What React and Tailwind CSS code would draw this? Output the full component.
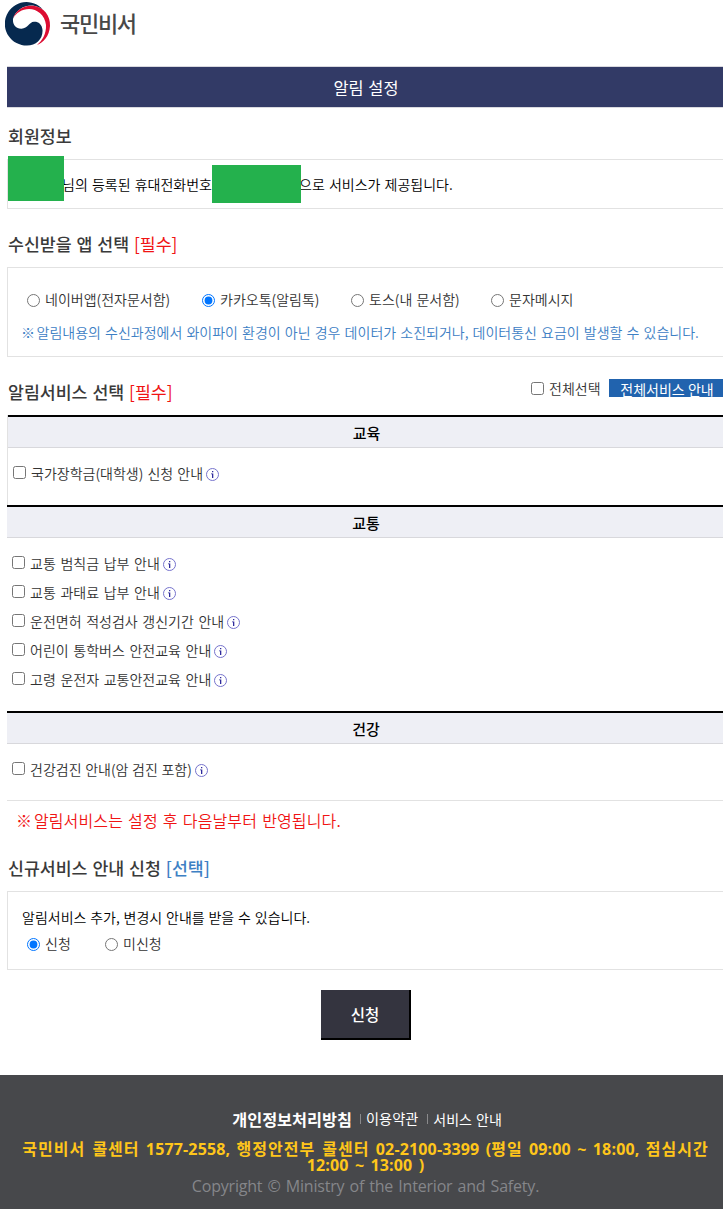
import React, { useState } from "react";

const apps = [
  { name: "네이버앱(전자문서함)", className: "w-[175px]" },
  { name: "카카오톡(알림톡)", className: "w-[149px]" },
  { name: "토스(내 문서함)", className: "w-[140px]" },
  { name: "문자메시지", className: "w-[120px]" },
];

const trafficServices = [
  "교통 범칙금 납부 안내",
  "교통 과태료 납부 안내",
  "운전면허 적성검사 갱신기간 안내",
  "어린이 통학버스 안전교육 안내",
  "고령 운전자 교통안전교육 안내",
];

const Logo = () => (
  <svg className="block" width="46" height="46" viewBox="0 0 46 46">
    <path
      d="M38 7.700A21.700 21.700 0 1 0 22 43.500C31 43.500 38 37 37.500 28C37 22 33 19.500 29 19.800C24 20 23 26.500 16.500 26.800C11 27 7.500 23 8 17C10 8 20 2.500 28 3.500C32 4 36 6 38 7.700Z"
      fill="#06294f"
    />
    <path
      d="M8 16.500C11 8 19 2.800 28 3.800C39 5 45.500 14 45 24C44.500 34 38 41 32 43C37 39 41.500 32 41 23C40 13 32 7 24 7C17 7 11 11 8 16.500Z"
      fill="#dc0d32"
    />
  </svg>
);

const InfoIcon = () => (
  <svg className="ml-[3px] mt-[2px] shrink-0" width="13" height="13" viewBox="0 0 13 13">
    <circle cx="6.500" cy="6.500" r="6" fill="#fff" stroke="#7673cc" />
    <path d="M6 3h1.300v1.300H6zM5 5.500h2.300V10H6V6.200H5z" fill="#2f2a9c" />
  </svg>
);

const SectionTitle = ({ children, mark, markClass }) => (
  <h3 className="pl-px text-[17.3px] leading-6 font-medium text-[#3a3a3a] whitespace-nowrap">
    {children} {mark && <span className={markClass}>{mark}</span>}
  </h3>
);

const ServiceItem = ({ name }) => (
  <label className="flex h-[29px] items-center whitespace-nowrap">
    <input type="checkbox" className="mr-[5px] h-[13px] w-[13px] -mt-[3px]" />
    <span className="-mt-px">{name}</span>
    <InfoIcon />
  </label>
);

const TableHead = ({ children }) => (
  <div className="h-[33px] border-t-2 border-t-black border-b border-b-[#d8d8dc] bg-[#eeeff5] text-center text-[15px] leading-[31px] font-medium text-black">
    {children}
  </div>
);

// Hangul in the call center line is set wider than the digits
const Ko = ({ children }) => <span className="tracking-[1px]">{children}</span>;

const App = () => {
  const [selectedApp, setSelectedApp] = useState("카카오톡(알림톡)");
  const [newService, setNewService] = useState("신청");

  return (
    <div className="h-[1209px] w-[723px] overflow-hidden bg-white font-['Noto_Sans_CJK_KR',sans-serif] text-[14px] font-[350] text-[#333] [word-spacing:1px]">
      <div className="w-[731px]">
        {/* Header */}
        <header className="flex h-[66px] pl-[5px] pt-[2px]">
          <Logo />
          <span className="ml-[9px] mt-[5px] text-[22px] leading-[30px] font-medium tracking-[-1.3px] text-[#484848]">
            국민비서
          </span>
        </header>

        <main className="ml-[7px] w-[718px]">
          <h2 className="h-[42px] border-y border-[#d9d9df] bg-[#323a66] bg-clip-padding text-center text-[16.4px] leading-[40px] font-normal text-white">
            알림 설정
          </h2>

          {/* Member info */}
          <div className="mt-[16px]">
            <SectionTitle>회원정보</SectionTitle>
          </div>
          <div className="mt-[11px] flex h-[50px] items-center border border-[#e2e2e2] text-black whitespace-nowrap">
            <span className="relative -top-[6px] z-10 h-[45px] w-[56px] shrink-0 bg-[#24b14d]" />
            <span className="-ml-[2px] w-[150px]">님의 등록된 휴대전화번호</span>
            <span className="z-10 h-[38px] w-[89px] shrink-0 bg-[#24b14d]" />
            <span className="-ml-[2px]">으로 서비스가 제공됩니다.</span>
          </div>

          {/* App selection */}
          <div className="mt-[23px]">
            <SectionTitle mark="[필수]" markClass="font-normal text-[#f01414]">
              수신받을 앱 선택
            </SectionTitle>
          </div>
          <div className="mt-[11px] h-[90px] border border-[#e2e2e2] pt-[20px]">
            <div className="flex h-[24px] pl-[19px]">
              {apps.map((app) => (
                <label key={app.name} className={`flex items-center whitespace-nowrap ${app.className}`}>
                  <input
                    type="radio"
                    name="app"
                    className="mr-[5px] h-[13px] w-[13px]"
                    checked={selectedApp === app.name}
                    onChange={() => setSelectedApp(app.name)}
                  />
                  <span className="-mt-[2px]">{app.name}</span>
                </label>
              ))}
            </div>
            <p className="mt-[8px] pl-[13px] leading-6 text-[#3d80c4] whitespace-nowrap">
              <span className="tracking-[-1.3px]">※ </span>
              알림내용의 수신과정에서 와이파이 환경이 아닌 경우 데이터가 소진되거나, 데이터통신 요금이 발생할 수 있습니다.
            </p>
          </div>

          {/* Service selection */}
          <div className="mt-[20px] flex h-[38px]">
            <div className="mt-[3px] w-[524px]">
              <SectionTitle mark="[필수]" markClass="font-normal text-[#f01414]">
                알림서비스 선택
              </SectionTitle>
            </div>
            <label className="flex h-[24px] w-[78px] items-center whitespace-nowrap">
              <input type="checkbox" className="mr-[5px] h-[13px] w-[13px] -mt-[2px]" />
              <span className="-mt-[2px]">전체선택</span>
            </label>
            <button className="mt-[2px] h-[18px] w-[116px] bg-[#2163ae] text-[14px] leading-[20px] font-normal text-white whitespace-nowrap">
              전체서비스 안내
            </button>
          </div>

          <section className="h-[90px] border-l border-[#e2e2e2]">
            <TableHead>교육</TableHead>
            <div className="pt-[11px] pl-[5px]">
              <ServiceItem name="국가장학금(대학생) 신청 안내" />
            </div>
          </section>
          <section className="h-[206px]">
            <TableHead>교통</TableHead>
            <div className="pt-[11px] pl-[5px] [word-spacing:1.5px]">
              {trafficServices.map((name) => (
                <ServiceItem key={name} name={name} />
              ))}
            </div>
          </section>
          <section className="h-[90px] border-b border-[#e2e2e2]">
            <TableHead>건강</TableHead>
            <div className="pt-[11px] pl-[5px] [word-spacing:0.5px]">
              <ServiceItem name="건강검진 안내(암 검진 포함)" />
            </div>
          </section>

          <p className="mt-[7px] pl-[9px] text-[16px] leading-6 tracking-[0.15px] text-[#f01414] [word-spacing:1.3px]">
            <span className="tracking-[-1.5px]">※ </span>
            알림서비스는 설정 후 다음날부터 반영됩니다.
          </p>

          {/* New service notice */}
          <div className="mt-[24px]">
            <SectionTitle mark="[선택]" markClass="text-[#3d80c4]">
              신규서비스 안내 신청
            </SectionTitle>
          </div>
          <div className="mt-[11px] h-[79px] border border-[#e2e2e2] pt-[13px]">
            <p className="pl-[14px] leading-6 text-black [word-spacing:0.7px]">
              알림서비스 추가, 변경시 안내를 받을 수 있습니다.
            </p>
            <div className="mt-[3px] flex h-[24px] pl-[19px]">
              {["신청", "미신청"].map((name) => (
                <label key={name} className="flex w-[78px] items-center">
                  <input
                    type="radio"
                    name="newService"
                    className="mr-[5px] h-[13px] w-[13px]"
                    checked={newService === name}
                    onChange={() => setNewService(name)}
                  />
                  <span className="-mt-[2px]">{name}</span>
                </label>
              ))}
            </div>
          </div>

          <button className="mx-auto mt-[20px] block h-[50px] w-[90px] border-r-2 border-b-2 border-black bg-[#34343f] pt-[2px] text-[15.5px] font-medium text-white">
            신청
          </button>
        </main>

        {/* Footer */}
        <footer className="mt-[35px] h-[134px] bg-[#47484b] pt-[32px] text-center">
          <div className="flex h-[24px] items-center justify-center pl-[3px] text-[14px] font-normal text-white">
            <strong className="text-[16.3px] font-bold">개인정보처리방침</strong>
            <span className="mr-[5px] ml-[8px] h-[10px] w-px bg-[#8a8a8c]" />
            <span className="text-[14.2px]">이용약관</span>
            <span className="mr-[5px] ml-[9px] h-[10px] w-px bg-[#8a8a8c]" />
            <span>서비스 안내</span>
          </div>
          <p className="mt-[10px] font-['Open_Sans','Noto_Sans_CJK_KR',sans-serif] text-[16px] leading-4 font-bold tracking-[0.15px] text-[#ffc61a] whitespace-nowrap [word-spacing:2px]">
            <Ko>국민비서 콜센터</Ko> 1577-2558, <Ko>행정안전부 콜센터</Ko> 02-2100-3399 (<Ko>평일</Ko> 09:00 ~ 18:00, <Ko>점심시간</Ko>
            <br />
            12:00 ~ 13:00 )
          </p>
          <p className="mt-px font-['Open_Sans',sans-serif] text-[16px] leading-6 font-normal tracking-[-0.2px] text-[#85868a] [word-spacing:1.2px]">
            Copyright © Ministry of the Interior and Safety.
          </p>
        </footer>
      </div>
    </div>
  );
};

export default App;
